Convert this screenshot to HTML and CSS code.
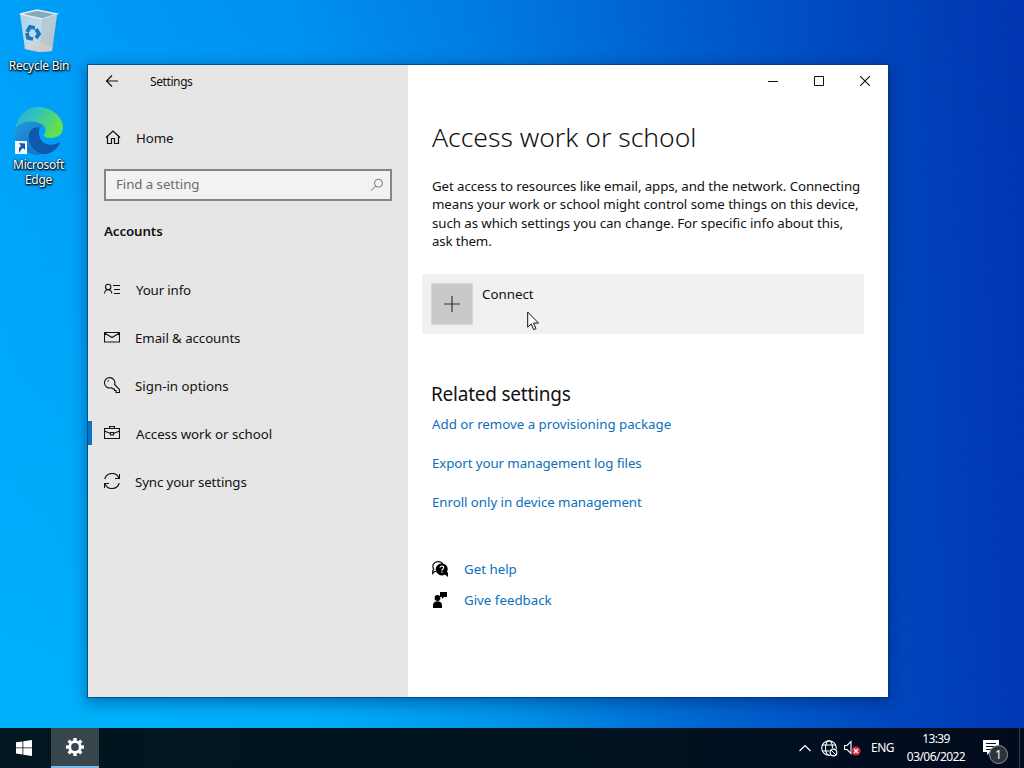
FILE: index.html
```html
<!DOCTYPE html>
<html lang="en">
<head>
<meta charset="utf-8">
<title>Settings</title>
<link rel="stylesheet" href="styles.css">
</head>
<body>
<main class="desktop">
  <div class="shortcuts">
    <div class="shortcut bin">
      <svg width="48" height="48" viewBox="0 0 48 48">
        <defs><linearGradient id="binBody" x1="0" y1="0" x2="1" y2="1"><stop offset="0" stop-color="#a9d3ea"/><stop offset=".55" stop-color="#c5dbe7"/><stop offset="1" stop-color="#a8b6c0"/></linearGradient></defs>
        <path d="M5 10 22 6 42 10 37 47 24 48 10 45Z" fill="url(#binBody)"/>
        <path d="M5 10 22 6 42 10 27 15Z" fill="#88a9bb" stroke="#e0eef5" stroke-width="1.3"/>
        <path d="M27 15 42 10 37 47 25 48Z" fill="#b3c4cf" opacity=".75"/>
        <path d="m9 43 16-5 12 5v4l-13 1-14-3Z" fill="#ddd0ca" opacity=".6"/>
        <g fill="none" stroke="#1477bf" stroke-width="3.8"><path d="m12 28 3-5 5 1"/><path d="m21 25 3 5-3 4"/><path d="m18 35-5-1-1-5"/></g>
      </svg>
      <span class="caption">Recycle Bin</span>
    </div>
    <div class="shortcut edge">
      <svg width="50" height="50" viewBox="0 0 50 50">
        <defs>
          <linearGradient id="edgeTop" x1="0" y1="0" x2="1" y2=".45"><stop offset="0" stop-color="#2aa9dc"/><stop offset=".45" stop-color="#30c3bd"/><stop offset="1" stop-color="#65e04b"/></linearGradient>
          <linearGradient id="edgeLeft" x1="0" y1="0" x2=".6" y2="1"><stop offset="0" stop-color="#2399dc"/><stop offset="1" stop-color="#1475c9"/></linearGradient>
        </defs>
        <path d="M1 23C4 8 13 1 25 1s24 10 24 20c0 7-5 11-12 11-4 0-8-1-7-4 3-3 2-6-1-9-5-3-20-5-28 4Z" fill="url(#edgeTop)"/>
        <path d="M17 20c-6 10-2 24 10 28 9 1 16-4 19-11-1-1-2 0-2 0-10 5-20-1-19-12 0-3 2-5 3-6-4-3-9-1-11 1Z" fill="#0e58ae"/>
        <path d="M1 24c3-8 16-11 25-6 3 2 3 4 1 4-9-3-14 5-12 14 1 6 6 10 12 13C12 50-1 38 1 24Z" fill="url(#edgeLeft)"/>
        <rect x="1" y="35" width="12" height="13" fill="#f4f7fb"/>
        <path d="m5 37 6 .5V44l-2-2c-2 1-3 3-3 5-2-3-1-6 1-7Z" fill="#1457aa"/>
      </svg>
      <span class="caption">Microsoft<br>Edge</span>
    </div>
  </div>

  <section class="window">
    <aside class="sidebar">
      <header class="titlebar">
        <svg class="back" width="14" height="14" viewBox="0 0 14 14"><path d="M13 7H1.5M7 1.5 1.5 7 7 12.5" fill="none" stroke="#111" stroke-width="1.2"/></svg>
        <span class="title">Settings</span>
      </header>
      <a class="row home">
        <svg width="16" height="16" viewBox="0 0 16 16"><path d="M1 8.500 8 2l7 6.500M2.500 7.500v7h4V9.500h3v5h4v-7" fill="none" stroke="#111" stroke-width="1.2"/></svg>
        <span class="t-home">Home</span>
      </a>
      <div class="search">
        <span>Find a setting</span>
        <svg width="14" height="14" viewBox="0 0 14 14"><circle cx="8.500" cy="5.200" r="4" fill="none" stroke="#777"/><path d="M5.500 8 1 12.800" stroke="#777" fill="none"/></svg>
      </div>
      <h2 class="group">Accounts</h2>
      <nav class="nav">
        <a class="row">
          <svg width="16" height="16" viewBox="0 0 16 16"><g fill="none" stroke="#111" stroke-width="1.1"><circle cx="4.200" cy="6" r="2.700"/><path d="M.6 12.500c0-5 7.200-5 7.200 0M9 4.500h7M10 8.500h6M10 12.500h6"/></g></svg>
          <span class="t-info">Your info</span>
        </a>
        <a class="row">
          <svg width="16" height="16" viewBox="0 0 16 16"><path d="M.5 3.500h15v9.500H.5ZM.5 4 8 8.500 15.500 4" fill="none" stroke="#111" stroke-width="1.100"/></svg>
          <span class="t-mail">Email &amp; accounts</span>
        </a>
        <a class="row">
          <svg width="16" height="16" viewBox="0 0 16 16"><path d="M10.600 7.500A5.200 5.200 0 1 0 7.500 10.700L9 12h1.500v1.500H12v2h3.500v-3ZM3.500 4h1.500" fill="none" stroke="#111" stroke-width="1.100"/></svg>
          <span class="t-sign">Sign-in options</span>
        </a>
        <a class="row selected">
          <svg width="16" height="16" viewBox="0 0 16 16"><path d="M.5 3.500h15v10H.5ZM5.500 3.500v-2h5v2M.5 6l6 2.500M15.500 6l-6 2.500M6.500 7.500h3v2.500h-3Z" fill="none" stroke="#111" stroke-width="1.100"/></svg>
          <span class="t-work">Access work or school</span>
        </a>
        <a class="row">
          <svg width="16" height="16" viewBox="0 0 16 16"><path d="M.7 6C3-1 12-1.500 15 5M15.500 1v4.500H11M15.300 10C13 17 4 17.500 1 11M.5 15v-4.500H5" fill="none" stroke="#111" stroke-width="1.100"/></svg>
          <span class="t-sync">Sync your settings</span>
        </a>
      </nav>
    </aside>

    <section class="content">
      <header class="controls">
        <svg width="10" height="10" viewBox="0 0 10 10"><path d="M0 5.500h10" stroke="#111"/></svg>
        <svg width="10" height="10" viewBox="0 0 10 10"><path d="M.5.5h9v9h-9Z" fill="none" stroke="#111"/></svg>
        <svg width="10" height="10" viewBox="0 0 10 10"><path d="m0 0 10 10M10 0 0 10" stroke="#111" stroke-width="1.100"/></svg>
      </header>
      <h1 class="heading"><span>Access work or school</span></h1>
      <p class="intro">
        <span class="p1">Get access to resources like email, apps, and the network. Connecting</span>
        <span class="p2">means your work or school might control some things on this device,</span>
        <span class="p3">such as which settings you can change. For specific info about this,</span>
        <span class="p4">ask them.</span>
      </p>
      <div class="connect">
        <span class="tile"><svg width="16" height="16" viewBox="0 0 16 16"><path d="M0 8h16M8 0v16" stroke="#333" stroke-width="1.200"/></svg></span>
        <span class="t-connect">Connect</span>
        <svg class="cursor" width="13" height="20" viewBox="0 0 13 20"><path d="M.7 1v15.200l3.500-3.300 2.500 5.700 2.300-1-2.500-5.500h5Z" fill="#fff" stroke="#111"/></svg>
      </div>
      <h2 class="related">Related settings</h2>
      <div class="links">
        <a class="t-add">Add or remove a provisioning package</a>
        <a class="t-export">Export your management log files</a>
        <a class="t-enroll">Enroll only in device management</a>
      </div>
      <div class="support">
        <a>
          <svg width="16" height="16" viewBox="0 0 16 16"><path d="M4 10.500H2.500L.7 12.500V9.500L1.800 8.500C-.8 4 2.500.6 6 .6c2.200 0 4 1 4.800 2.500" fill="none" stroke="#111" stroke-width="1.200"/><path d="M10 2.500a5.600 5.600 0 0 1 5 8.300L16 12v4l-3-2.500A6 6 0 1 1 10 2.500Z"/><path d="M8 6.500c.2-2 3.800-2 3.600.2-.1 1.300-1.700 1.200-1.700 2.800m0 1v1.200" fill="none" stroke="#fff" stroke-width="1.200"/></svg>
          <span class="t-help">Get help</span>
        </a>
        <a>
          <svg width="16" height="16" viewBox="0 0 16 16"><circle cx="5.500" cy="6" r="2.900"/><path d="M1 16v-3c0-5 9-5 9 0v3ZM8 0h7v5h-3l-2 2V5H8Z"/></svg>
          <span class="t-feed">Give feedback</span>
        </a>
      </div>
    </section>
  </section>
</main>

<footer class="taskbar">
  <div class="start"><svg width="16" height="16" viewBox="0 0 16 16"><path d="m0 2.300 6.500-.9v6.100H0ZM7.300 1.300 16 0v7.500H7.300ZM0 8.300h6.500v6.100L0 13.500ZM7.300 8.300H16V16l-8.700-1.300Z" fill="#fff"/></svg></div>
  <div class="app"><svg width="18" height="18" viewBox="-9 -9 18 18"><g fill="#fff"><g id="teeth"><rect x="-1.700" y="-9" width="3.400" height="18"/><rect x="-9" y="-1.700" width="18" height="3.400"/></g><use href="#teeth" transform="rotate(45)"/><circle r="6.700"/></g><circle r="3.900" fill="#38464e"/></svg></div>
  <div class="tray">
    <svg class="chev" width="12" height="8" viewBox="0 0 12 8"><path d="m.5 7 5.500-5.500L11.500 7" fill="none" stroke="#fff" stroke-width="1.200"/></svg>
    <svg class="net" width="17" height="17" viewBox="0 0 17 17"><g fill="none" stroke="#fff" stroke-width="1.100"><circle cx="8" cy="8" r="7.300"/><ellipse cx="8" cy="8" rx="3.500" ry="7.300"/><path d="M1.500 5h13M1.500 11h13"/></g><circle cx="12.500" cy="12.500" r="4.500" fill="#02111f"/><circle cx="12.500" cy="12.500" r="3.300" fill="none" stroke="#fff" stroke-width="1.200"/><path d="m10.200 10.200 4.600 4.600" stroke="#fff"/></svg>
    <svg class="vol" width="17" height="16" viewBox="0 0 17 16"><path d="M.6 5.500H3l4-4v12l-4-4H.6Z" fill="none" stroke="#fff" stroke-width="1.100"/><circle cx="12" cy="11" r="4.600" fill="#d42a3b"/><path d="m10 9 4 4m0-4-4 4" stroke="#fff" stroke-width="1.300"/></svg>
    <span class="lang">ENG</span>
    <div class="clock"><span class="time">13:39</span><span class="date">03/06/2022</span></div>
    <div class="notes">
      <svg width="16" height="16" viewBox="0 0 16 16"><path d="M0 0h16v12H7l-3 3v-3H0Z" fill="#fff"/><path d="M3 3.500h10M3 6.500h10M3 9.500h6" stroke="#04101b"/></svg>
      <span class="badge">1</span>
    </div>
  </div>
</footer>
</body>
</html>
```
FILE: styles.css
```css
* { box-sizing: border-box; }
body {
  margin: 0;
  width: 1024px;
  height: 768px;
  overflow: hidden;
  display: flex;
  flex-direction: column;
  font: 13.3px/18px "Noto Sans", "Open Sans", sans-serif;
  color: #111;
}
span, a { white-space: nowrap; }
svg { flex: none; display: block; }
h1, h2, p { margin: 0; font-weight: 400; }

.desktop {
  position: relative;
  flex: 1;
  background: linear-gradient(90deg, #00b2fc 0, #00aff7 29%, #0095e8 49%, #0068d2 68%, #0047be 87%, #0038b4 100%);
}
/* Cooler upper half of the wallpaper, fading out toward the bottom */
.desktop::before {
  content: "";
  position: absolute;
  inset: 0;
  background: linear-gradient(90deg, #009ff8 0, #0090ee 29%, #0078de 49%, #005bcb 68%, #0048bd 83%, #0035b0 100%);
  -webkit-mask-image: linear-gradient(#000, transparent);
  mask-image: linear-gradient(#000, transparent);
}
.shortcuts { position: relative; width: 78px; display: flex; flex-direction: column; }
.shortcut { display: flex; flex-direction: column; align-items: center; color: #fff; text-align: center; }
.bin { padding-top: 4px; height: 106px; }
.caption { font-size: 12px; line-height: 15px; letter-spacing: -.25px; text-shadow: 0 1px 2px #000, 1px 1px 2px #000, 0 0 2px rgba(0, 0, 0, .6); }
.bin .caption { margin-top: 6px; }
.edge .caption { margin-top: 1px; margin-right: 1px; }

.window {
  position: absolute;
  left: 88px;
  top: 65px;
  width: 800px;
  height: 632px;
  display: flex;
  background: #fff;
  box-shadow: 0 0 0 1px rgba(0, 55, 110, .65), 0 4px 14px 2px rgba(0, 20, 80, .4);
}
.sidebar { width: 320px; background: #e6e6e6; }
.titlebar { height: 32px; display: flex; align-items: center; padding-left: 17px; }
.back { margin-top: -1px; }
.title { margin: 2px 0 0 31px; font-size: 12px; letter-spacing: -.4px; }
.row { display: flex; align-items: center; height: 48px; padding-left: 16px; gap: 16px; }
.row svg { margin-top: -2px; }
.home { margin-top: 17px; padding-left: 17px; gap: 15px; }
.t-home { letter-spacing: -.1px; }
.t-info { letter-spacing: -.15px; }
.t-mail { margin-left: -1px; letter-spacing: -.08px; }
.t-sign { margin-left: -1px; }
.t-work { letter-spacing: -.04px; }
.t-sync { margin-left: -1px; letter-spacing: -.12px; }
.search {
  margin: 7px 16px 0;
  height: 32px;
  border: 2px solid #858585;
  background: #f2f2f2;
  display: flex;
  align-items: center;
  justify-content: space-between;
  padding: 0 6px 2px 10px;
  color: #6c6c6c;
}
.search span { letter-spacing: -.07px; }
.search svg { margin-top: 2px; }
.group { margin: 21px 0 0 16px; font-size: 13.3px; font-weight: 600; line-height: 18px; letter-spacing: -.1px; }
.nav { margin-top: 26px; }
.selected { border-left: 4px solid #0a75c8; border-image: linear-gradient(transparent 11px, #0a75c8 11px, #0a75c8 35px, transparent 35px) 0 0 0 4; padding-left: 12px; }

.content { width: 480px; padding-left: 24px; }
.controls { height: 32px; display: flex; align-items: center; justify-content: flex-end; gap: 36px; padding-right: 18px; }
.heading { margin-top: 19px; font: 300 26.5px/42px "Noto Sans", "Open Sans", sans-serif; }
.intro { margin-top: 19px; display: flex; flex-direction: column; line-height: 18.4px; }
.p1 { letter-spacing: -.095px; }
.p2 { letter-spacing: -.06px; }
.p3 { letter-spacing: -.075px; }
.p4 { letter-spacing: -.15px; }
.connect {
  position: relative;
  margin: 23.4px 0 0 -10px;
  width: 442px;
  height: 60px;
  padding: 10px;
  display: flex;
  gap: 10px;
  background: #f1f1f1;
}
.tile { width: 40px; height: 40px; background: #c9c9c9; display: flex; align-items: center; justify-content: center; box-shadow: 0 0 1px 1px #d8d8d8; }
.t-connect { margin-top: 1px; }
.cursor { position: absolute; left: 105px; top: 37px; }
.related { margin: 47px 0 0 -1px; font-size: 19px; line-height: 26px; letter-spacing: -.23px; }
.links { display: flex; flex-direction: column; align-items: flex-start; gap: 21px; margin-top: 8px; color: #0b70bc; }
.t-add { letter-spacing: -.02px; }
.t-export { letter-spacing: -.09px; }
.t-enroll { letter-spacing: -.05px; }
.support { margin-top: 49px; display: flex; flex-direction: column; gap: 13px; color: #0b70bc; }
.support a { display: flex; gap: 16px; height: 18px; align-items: center; }
.support svg { fill: #000; }

.taskbar { height: 40px; display: flex; background: linear-gradient(90deg, #00171f, #011321 60%, #020a1e); color: #fff; font-size: 12px; }
.start { width: 51px; display: flex; align-items: center; padding-left: 16px; }
.app { width: 48px; display: flex; align-items: center; justify-content: center; background: #38464e; border-bottom: 2px solid #76b9ed; }
.tray { flex: 1; display: flex; align-items: center; justify-content: flex-end; }
.net { margin-left: 10px; }
.vol { margin-left: 6px; }
.lang { width: 25px; margin-left: 10px; letter-spacing: -.5px; }
.clock { width: 60px; margin-left: 10px; display: flex; flex-direction: column; align-items: center; line-height: 18px; }
.time { letter-spacing: -.6px; }
.date { letter-spacing: -.55px; }
.notes { position: relative; width: 37px; height: 40px; margin-left: 17px; padding-top: 12px; margin-right: 4px; border-right: 1px solid #35404d; }
.badge { position: absolute; left: 6px; top: 17px; width: 19px; height: 19px; border: 1px solid #8d949a; border-radius: 50%; background: #2c3339; text-align: center; line-height: 17px; }
```
